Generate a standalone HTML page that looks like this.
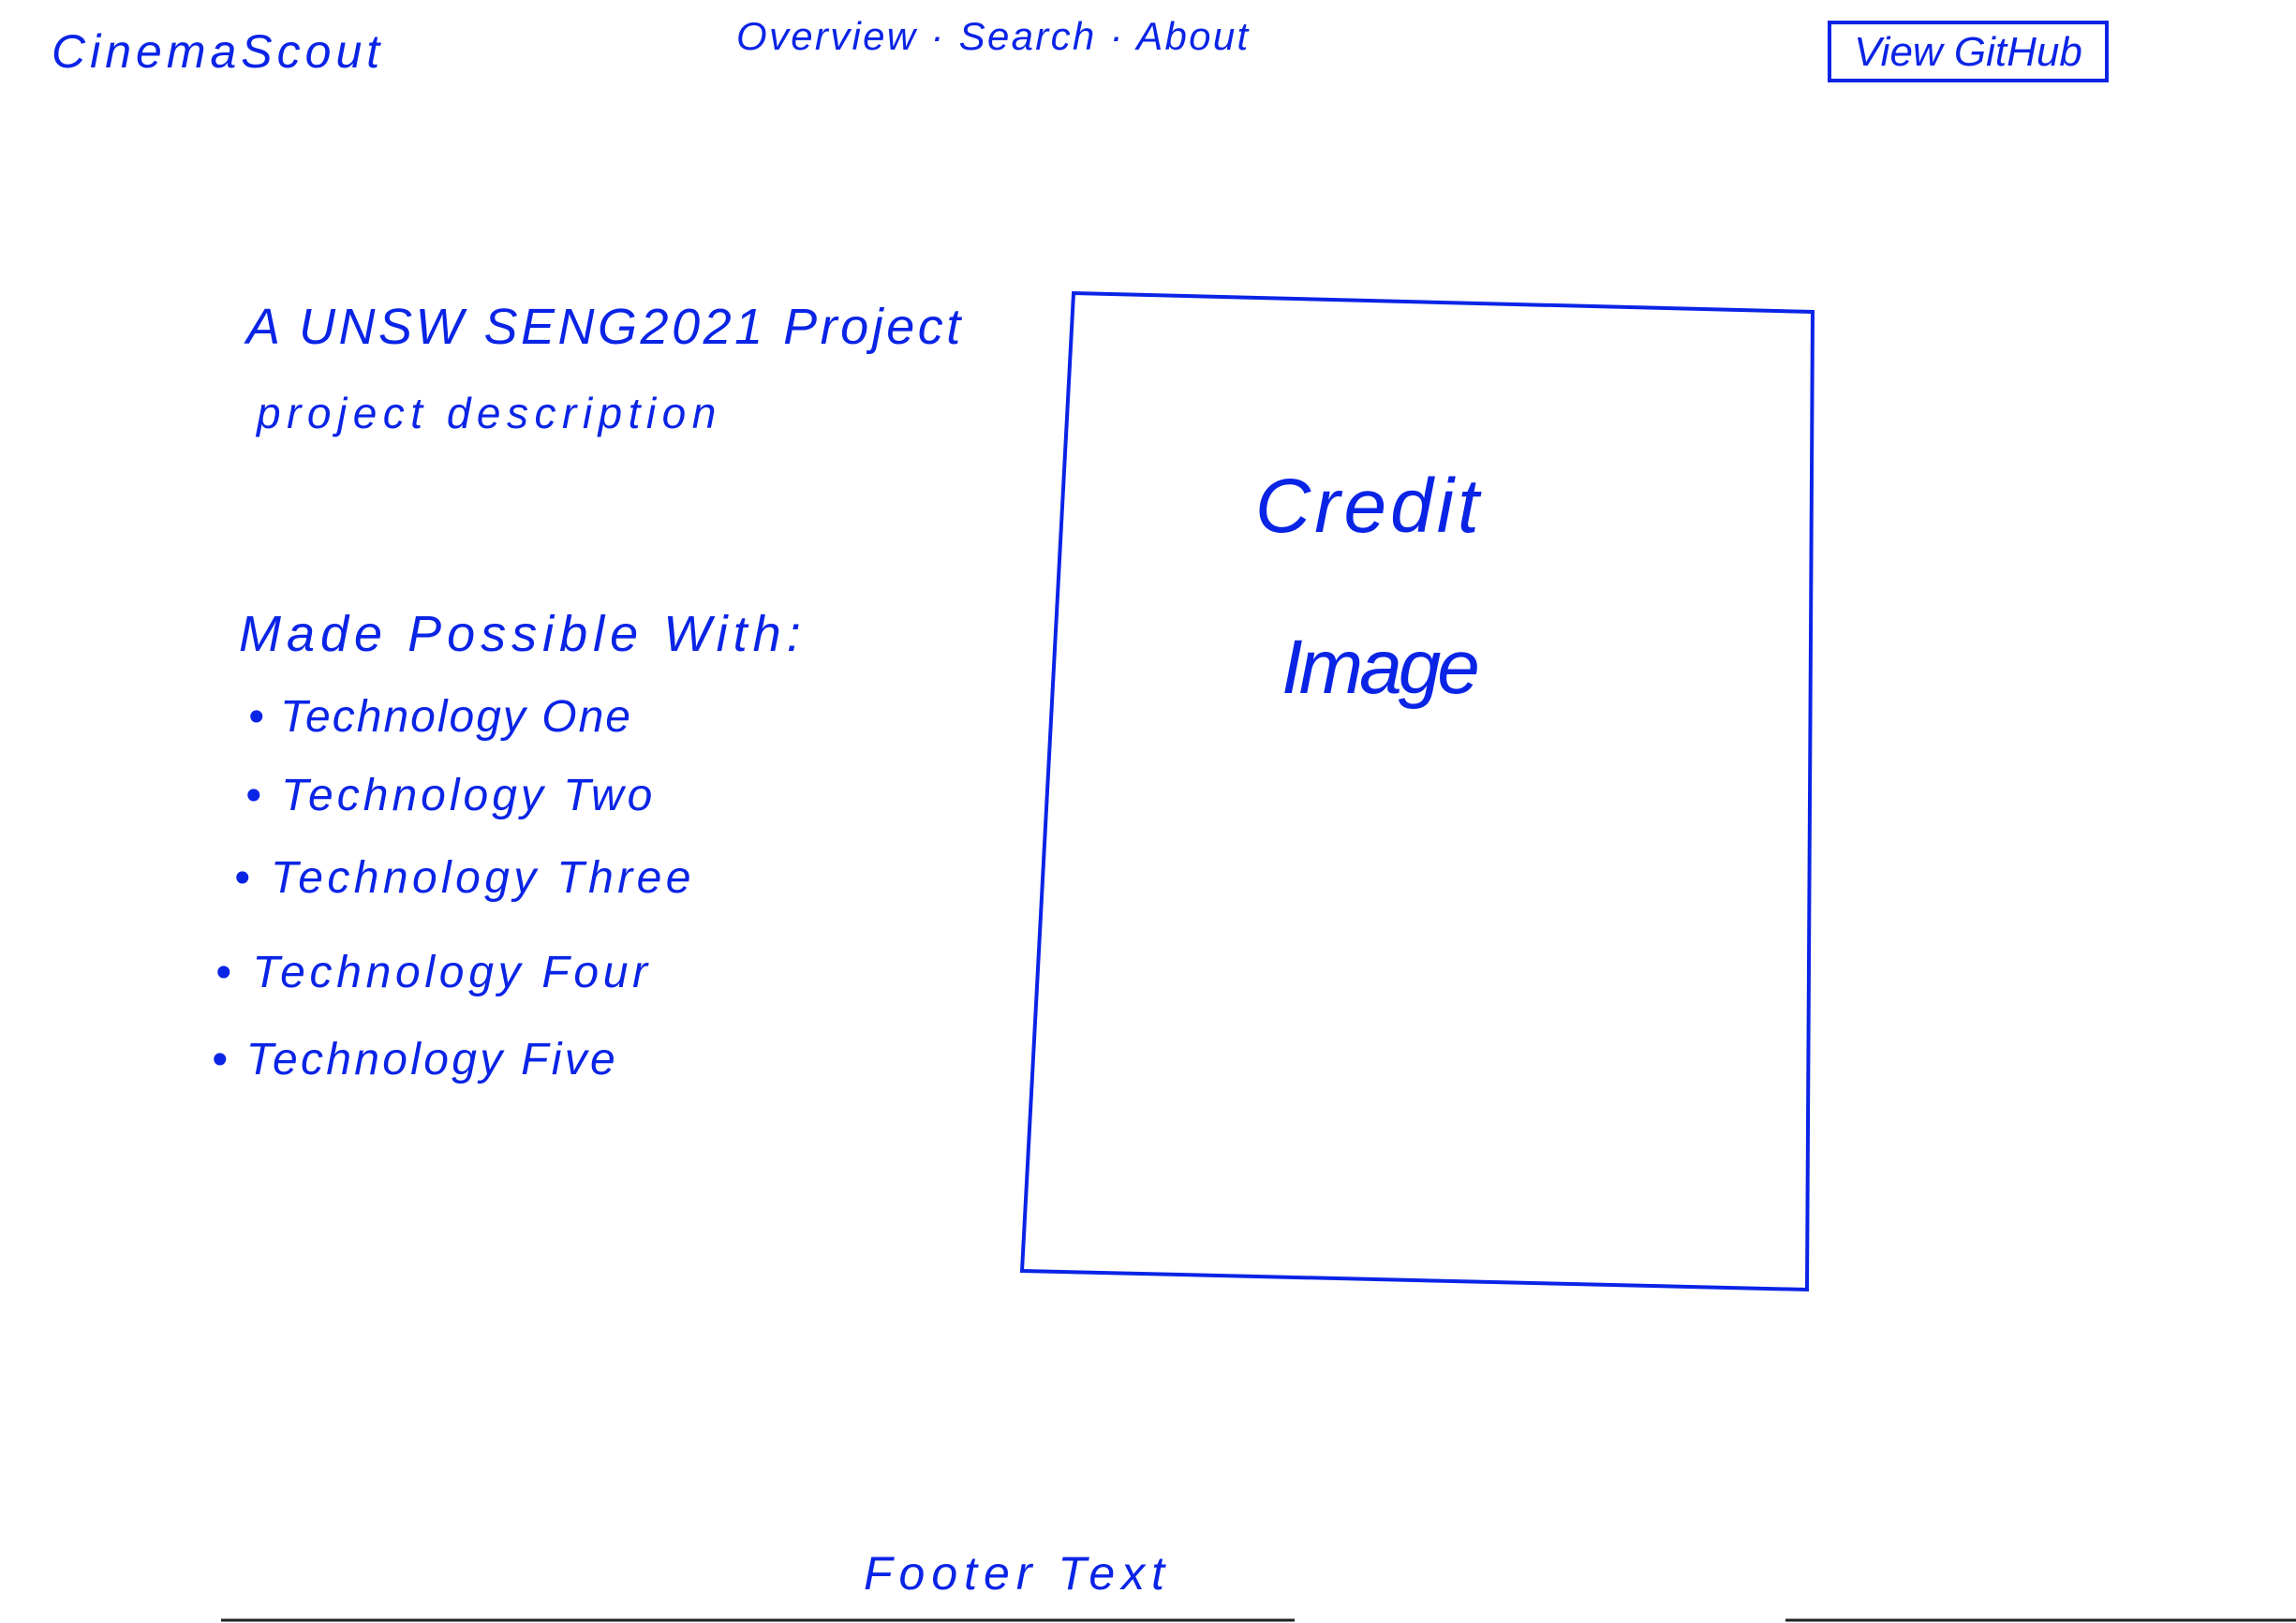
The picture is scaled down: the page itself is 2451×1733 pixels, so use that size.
<!DOCTYPE html>
<html><head><meta charset="utf-8"><style>
html,body{margin:0;padding:0;background:#fff;}
body{width:2451px;height:1733px;position:relative;overflow:hidden;font-family:"Liberation Sans",sans-serif;color:#0a24e6;font-style:italic;}
.t{position:absolute;white-space:nowrap;line-height:1;}
</style></head><body>
<div class="t" style="left:55px;top:30px;font-size:50px;letter-spacing:5px;">CinemaScout</div>
<div class="t" style="left:786px;top:18px;font-size:42px;letter-spacing:2.3px;">Overview · Search · About</div>
<div class="t" style="left:1951px;top:22px;width:300px;height:66px;border:4px solid #0a24e6;box-sizing:border-box;font-size:44px;line-height:60px;text-align:center;">View GitHub</div>
<div class="t" style="left:263px;top:322px;font-size:54px;letter-spacing:3.5px;">A UNSW SENG2021 Project</div>
<div class="t" style="left:274px;top:418px;font-size:46px;letter-spacing:6.5px;">project description</div>
<div class="t" style="left:255px;top:650px;font-size:54px;letter-spacing:6px;">Made Possible With:</div>
<div class="t" style="left:265px;top:742px;font-size:48px;letter-spacing:2px;">• Technology One</div>
<div class="t" style="left:262px;top:826px;font-size:48px;letter-spacing:4px;">• Technology Two</div>
<div class="t" style="left:250px;top:914px;font-size:48px;letter-spacing:4.4px;">• Technology Three</div>
<div class="t" style="left:230px;top:1015px;font-size:48px;letter-spacing:4.7px;">• Technology Four</div>
<div class="t" style="left:226px;top:1108px;font-size:48px;letter-spacing:3.3px;">• Technology Five</div>
<svg style="position:absolute;left:0;top:0" width="2451" height="1733">
<polygon points="1146,313 1935,333 1929,1377 1091,1357" fill="none" stroke="#0a24e6" stroke-width="4"/>
<line x1="236" y1="1730" x2="1382" y2="1730" stroke="#222" stroke-width="3"/>
<line x1="1906" y1="1730" x2="2451" y2="1730" stroke="#222" stroke-width="3"/>
</svg>
<div class="t" style="left:1340px;top:500px;font-size:82px;letter-spacing:4px;">Credit</div>
<div class="t" style="left:1368px;top:672px;font-size:82px;letter-spacing:-4px;">Image</div>
<div class="t" style="left:922px;top:1655px;font-size:50px;letter-spacing:7px;">Footer Text</div>
</body></html>
